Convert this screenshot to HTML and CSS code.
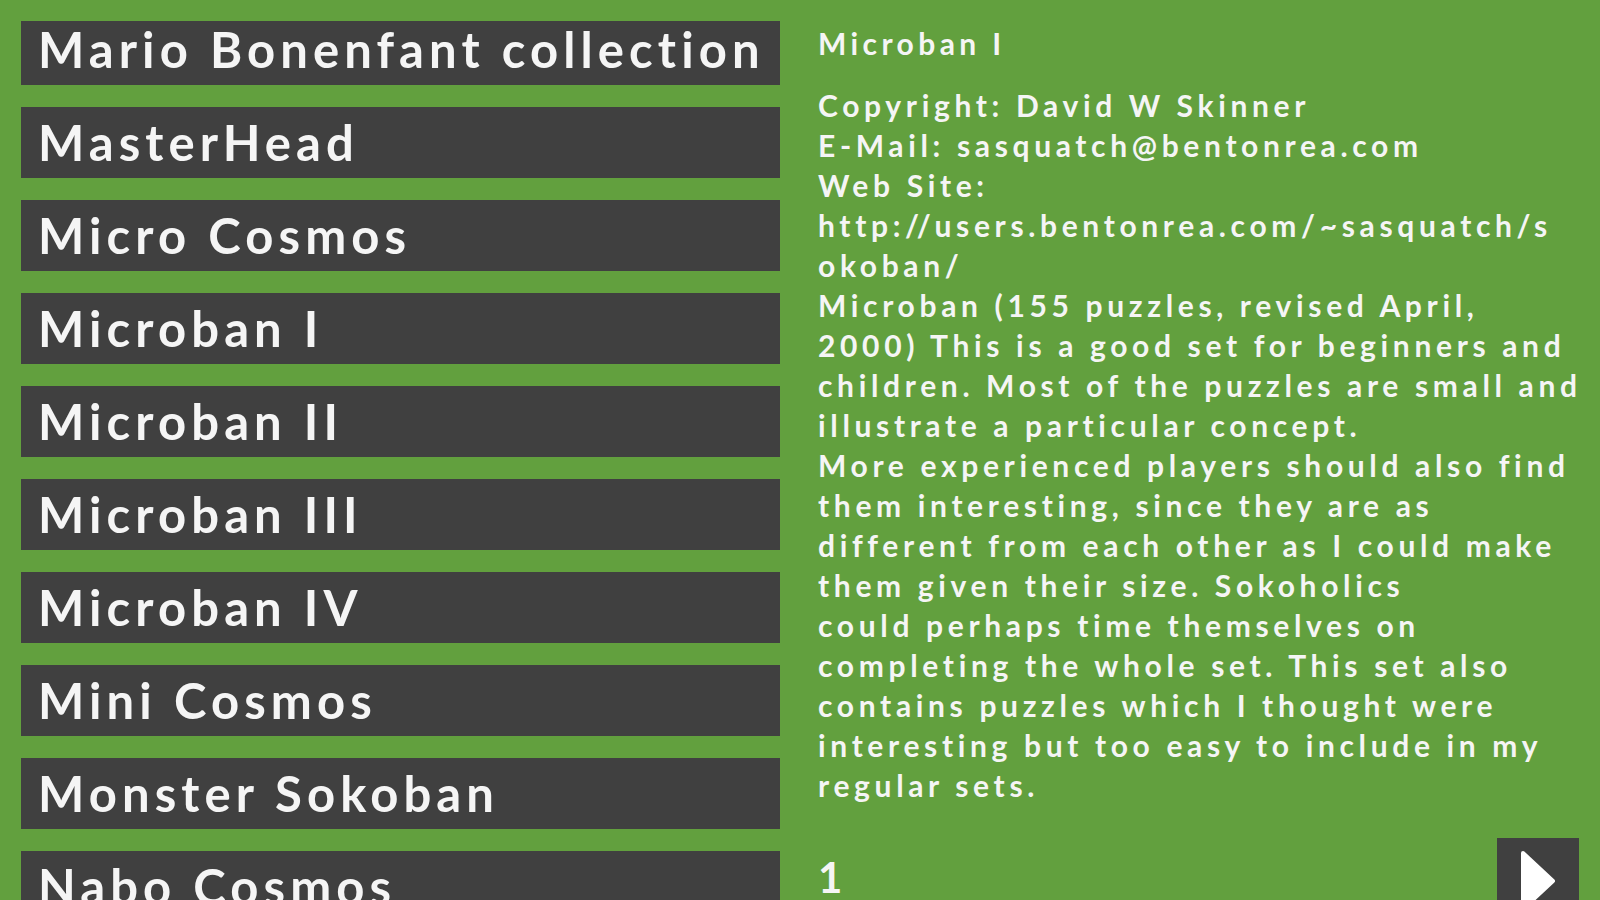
FILE: index.html
```html
<!DOCTYPE html>
<html>
<head>
<meta charset="utf-8">
<link rel="stylesheet" href="styles.css">
</head>
<body>
<div class="app">
  <div class="list">
    <div class="list-inner">
      <div class="item">Mario Bonenfant collection</div>
      <div class="item">MasterHead</div>
      <div class="item">Micro Cosmos</div>
      <div class="item">Microban I</div>
      <div class="item">Microban II</div>
      <div class="item">Microban III</div>
      <div class="item">Microban IV</div>
      <div class="item">Mini Cosmos</div>
      <div class="item">Monster Sokoban</div>
      <div class="item">Nabo Cosmos</div>
    </div>
  </div>
  <div class="detail">
    <div class="title">Microban I</div>
    <div class="desc">Copyright: David W Skinner<br>E-Mail: sasquatch@bentonrea.com<br>Web Site:<br>http://users.bentonrea.com/~sasquatch/s<br>okoban/<br>Microban (155 puzzles, revised April,<br>2000) This is a good set for beginners and<br>children. Most of the puzzles are small and<br>illustrate a particular concept.<br>More experienced players should also find<br>them interesting, since they are as<br>different from each other as I could make<br>them given their size. Sokoholics<br>could perhaps time themselves on<br>completing the whole set. This set also<br>contains puzzles which I thought were<br>interesting but too easy to include in my<br>regular sets.</div>
    <div class="pager">
      <div class="page-num">1</div>
      <button class="next" aria-label="Next">
        <svg width="36" height="62" viewBox="0 0 36 62"><path d="M3 3 L33 31 L3 59 Z" fill="#ffffff" stroke="#ffffff" stroke-width="4" stroke-linejoin="round"/></svg>
      </button>
    </div>
  </div>
</div>
</body>
</html>
```
FILE: styles.css
```css
html, body {
  margin: 0;
  padding: 0;
}
body {
  width: 1600px;
  height: 900px;
  overflow: hidden;
  background: #62a03e;
  font-family: Lato, "Open Sans", sans-serif;
  color: #f5f5f5;
}
.app {
  display: flex;
  padding: 21px 0 0 21px;
  height: 879px;
}
.list {
  width: 759px;
  flex: none;
  overflow: hidden;
}
.list-inner {
  display: flex;
  flex-direction: column;
  gap: 22px;
  margin-top: -7px;
}
.item {
  height: 71px;
  line-height: 71px;
  background: #404040;
  padding-left: 17px;
  font-size: 49px;
  font-weight: 700;
  letter-spacing: 5.1px;
  white-space: nowrap;
  overflow: hidden;
}
.detail {
  margin-left: 38px;
  width: 772px;
  flex: none;
  display: flex;
  flex-direction: column;
  padding-top: 2px;
}
.title {
  font-size: 30px;
  line-height: 40px;
  font-weight: 700;
  letter-spacing: 4.4px;
  margin-bottom: 22px;
}
.desc {
  font-size: 30px;
  line-height: 40px;
  font-weight: 700;
  letter-spacing: 4.65px;
  white-space: nowrap;
}
.pager {
  display: flex;
  justify-content: space-between;
  align-items: flex-start;
  margin-top: 33px;
  padding-right: 11px;
}
.page-num {
  font-size: 42px;
  font-weight: 700;
  line-height: 42px;
  padding-top: 18px;
}
.next {
  width: 82px;
  height: 82px;
  background: #404040;
  border: 0;
  padding: 12px 0 0 23px;
  display: flex;
  align-items: flex-start;
  justify-content: flex-start;
}
```
